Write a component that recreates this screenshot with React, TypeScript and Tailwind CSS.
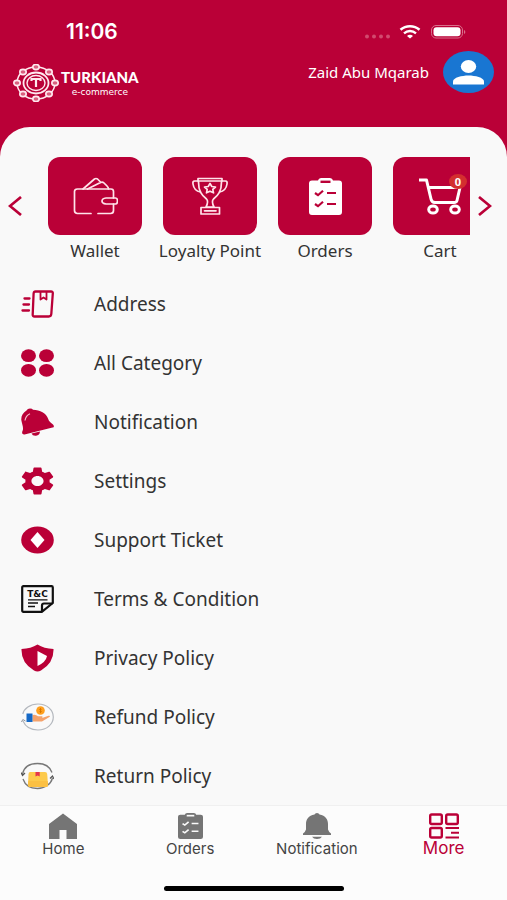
import React, { useRef, useState } from "react";

type IconProps = { className?: string };

const nodes = [
  [23, 3],
  [36, 8],
  [42, 19],
  [36, 30],
  [23, 35],
  [10, 30],
  [4, 19],
  [10, 8],
];

function LogoIcon() {
  return (
    <svg width="46" height="38" viewBox="0 0 46 38" fill="none" stroke="#ffe9ef">
      <ellipse cx="23" cy="19" rx="19" ry="16" strokeWidth="1.5" />
      {nodes.map(([x, y]) => (
        <g key={`${x}-${y}`}>
          <ellipse cx={x} cy={y} rx="3.2" ry="2.6" fill="#d9607f" strokeWidth="1.6" />
        </g>
      ))}
      <ellipse cx="23" cy="19" rx="12.5" ry="10.5" strokeWidth="1.8" />
      <ellipse cx="23" cy="19" rx="9" ry="7.500" strokeWidth="1.4" />
      <path d="M18.500 17v-2h9v2M23 15v8" strokeWidth="2.200" />
    </svg>
  );
}

function StatusIcons() {
  return (
    <svg width="104" height="16" viewBox="0 0 104 16" fill="none" aria-hidden="true">
      <g fill="#d14a6e">
        <circle cx="5" cy="12.5" r="2" />
        <circle cx="12" cy="12.5" r="2" />
        <circle cx="19" cy="12.5" r="2" />
        <circle cx="26" cy="12.5" r="2" />
      </g>
      <path d="M38.500 5.800c5.400-4.700 13.600-4.700 19 0" stroke="#fff" strokeWidth="2.600" />
      <path d="M42 9.300c3.500-3 8.500-3 12 0" stroke="#fff" strokeWidth="2.400" />
      <path d="M45 12c1.800-1.600 4.200-1.600 6 0l-3 2.600z" fill="#fff" />
      <rect x="69.500" y="1.500" width="31" height="12.500" rx="4.500" stroke="#d9708b" />
      <rect x="71.500" y="3.300" width="27" height="9" rx="3" fill="#fff" />
      <path d="M102 6v4c1.800-.6 1.800-3.400 0-4z" fill="#d9708b" />
    </svg>
  );
}

function WalletIcon() {
  return (
    <svg width="46" height="40" viewBox="0 0 46 40" fill="none" stroke="#ffe3ea" strokeWidth="1.700" strokeLinecap="round" strokeLinejoin="round">
      <path d="M19 37.500H5.500q-3 0-3-3v-19q0-2.500 3-2.500H39q2.500 0 2.500 2.500V22M41.500 28v6.500q0 3-3 3H26" />
      <path d="M34 22h9.500q2 0 2 3t-2 3H34q-4-.500-4-3t4-3z" />
      <path d="M11 13 22.500 3q1.500-1 3 0L29 6.500M15.500 13l13-6.500q2-1 3.500.500l3 3q1.500 1.500 1.500 3" />
    </svg>
  );
}

function TrophyIcon() {
  return (
    <svg width="38" height="40" viewBox="0 0 38 40" fill="none" stroke="#ffe3ea" strokeWidth="1.700" strokeLinecap="round" strokeLinejoin="round">
      <path d="M7 2.500h24v2.500H7zM7.500 6c0 9 3 13 8 17 2 2 1.500 4-.500 8h8c-2-4-2.500-6-.500-8 5-4 8-8 8-17" />
      <path d="M7 5H3.500Q1.500 5 2 8q1 7 7.500 8M31 5h3.500q2 0 1.500 3-1 7-7.500 8" />
      <path d="m19 7.500 1.800 3 3.700.500-2.700 2.400.7 3.400-3.500-1.600-3.500 1.600.7-3.400-2.700-2.400 3.700-.500z" />
      <path d="M10 31.500h18.500v6.500H10zM13.500 34.800h11.500" />
    </svg>
  );
}

function ClipboardIcon({ className }: IconProps) {
  return (
    <svg viewBox="0 0 33 37" preserveAspectRatio="none" className={className} fill="none">
      <path d="M3 2.500h6q.500-2.500 3-2.500h9q2.500 0 3 2.500h6q3 0 3 3v28.500q0 3-3 3H3q-3 0-3-3V5.500q0-3 3-3z" fill="currentColor" />
      <path d="M11.500 3.800h10" stroke="var(--mark)" strokeWidth="2.400" />
      <path d="m6 15 3 2.200 5-4.500M6 26l3 2.200 5-4.500M18 15h9M18 26h9" stroke="var(--mark)" strokeWidth="2.200" />
    </svg>
  );
}

function CartIcon() {
  return (
    <svg width="44" height="38" viewBox="0 0 44 38" fill="none" stroke="#fff" strokeWidth="3" strokeLinejoin="round">
      <path d="M1 3h7.500l4.500 19q.700 3.500 4 3.500h20M11 10.500h31l-3 13q-.500 2-3 2" />
      <ellipse cx="15" cy="32.500" rx="4.300" ry="3.500" />
      <ellipse cx="37" cy="32.500" rx="4.300" ry="3.500" />
    </svg>
  );
}

function AddressIcon() {
  return (
    <svg width="33" height="28" viewBox="0 0 33 28" fill="none" stroke="#ba0037" strokeWidth="2.300" strokeLinecap="round" strokeLinejoin="round">
      <path d="M14.500 1.500H30q2 0 1.800 2l-1.500 20.500q-.200 2.500-2.500 2.500H13.500q-2 0-1.800-2L12.600 3.500q.200-2 1.900-2z" />
      <path d="M19.500 2v7.500l3-2 3 2V2" strokeWidth="1.800" />
      <path d="M3.500 8.500h5M2.500 14.500h5.500M1.500 20.500h6.500" />
    </svg>
  );
}

function CategoryIcon() {
  return (
    <svg width="33" height="28" viewBox="0 0 33 28" fill="#ba0037">
      <ellipse cx="7.500" cy="6.700" rx="7.500" ry="6.400" />
      <ellipse cx="25.500" cy="6.700" rx="7.500" ry="6.400" />
      <ellipse cx="7.500" cy="21.300" rx="7.500" ry="6.400" />
      <ellipse cx="25.500" cy="21.300" rx="7.500" ry="6.400" />
    </svg>
  );
}

function RingIcon() {
  return (
    <svg width="33" height="28" viewBox="0 0 33 28" fill="#ba0037">
      <path d="M5.500 2.500Q6.500.500 9 .500q2.300 0 3 1.300C19 2 25.500 5.500 27 10.500c.8 3 3 4 5 6 1.500 1.500 1 3-.5 3L3.500 26.500c-2 .3-3-1.500-2-3.500C3 20 1 16 .3 12 0 8 2 4.500 5.500 2.500z" />
      <path d="m10.500 25.500 8.500-2q-.3 3.800-4 4.200-3.500.3-4.500-2.200z" />
      <path d="M4 12.500c.5-3.500 2-5.500 5-6.800" fill="none" stroke="#f3b8c8" strokeWidth="1.200" />
    </svg>
  );
}

function GearIcon() {
  return (
    <svg width="33" height="28" viewBox="2.200 2 19.600 20" preserveAspectRatio="none" fill="#ba0037">
      <path d="M19.140 12.940c.040-.300.060-.610.060-.940 0-.320-.020-.640-.070-.940l2.030-1.580c.180-.140.230-.410.120-.610l-1.920-3.320c-.120-.220-.370-.290-.590-.220l-2.390.960c-.500-.380-1.030-.700-1.620-.940l-.360-2.540c-.040-.240-.240-.410-.480-.410h-3.840c-.240 0-.430.170-.470.410l-.360 2.540c-.590.240-1.130.570-1.620.940l-2.390-.960c-.220-.080-.470 0-.590.220L2.740 8.870c-.120.210-.080.470.120.610l2.030 1.580c-.050.300-.090.630-.090.940s.020.640.070.940l-2.030 1.580c-.180.140-.230.410-.120.610l1.920 3.320c.120.220.370.290.590.220l2.390-.960c.500.380 1.030.700 1.620.940l.360 2.540c.050.240.240.410.480.410h3.840c.240 0 .440-.170.470-.410l.360-2.540c.590-.240 1.130-.560 1.620-.940l2.390.960c.220.080.470 0 .590-.220l1.920-3.320c.120-.220.070-.470-.120-.610l-2.010-1.580zM12 15.600c-1.980 0-3.600-1.620-3.600-3.600s1.620-3.600 3.600-3.600 3.600 1.620 3.600 3.600-1.620 3.600-3.600 3.600z" />
    </svg>
  );
}

function TicketIcon() {
  return (
    <svg width="33" height="28" viewBox="0 0 33 28">
      <ellipse cx="16.500" cy="14" rx="16.300" ry="13.500" fill="#ba0037" />
      <path d="m16.500 6 7 8-7 8-7-8z" fill="#fff" />
    </svg>
  );
}

function TermsIcon() {
  return (
    <svg width="33" height="28" viewBox="0 0 33 28" fill="none" stroke="#111" strokeWidth="2.200" strokeLinejoin="round">
      <path d="M2.500 1.200h28q1.300 0 1.300 1.300V18l-11 8.800H2.500q-1.300 0-1.300-1.300v-23q0-1.300 1.300-1.300z" />
      <path d="M31.500 18.500h-8.500q-2 0-2 2v6" />
      <path d="M7 14.800h19.500M7 18h10M7 21.500h7" strokeWidth="1.300" />
      <text x="16.500" y="11.500" textAnchor="middle" fontFamily="DejaVu Sans" fontWeight="700" fontSize="9" fill="#111" stroke="none">
        T&amp;C
      </text>
    </svg>
  );
}

function PrivacyIcon() {
  return (
    <svg width="33" height="28" viewBox="0 0 33 28">
      <path d="M16.500.500Q23 4.500 32.500 5 33 19 20 26.500q-3.500 2-7 0Q0 19 .5 5 10 4.500 16.500.500z" fill="#ba0037" />
      <path d="M16.500 7 26 12q-1 6-9.500 10z" fill="#fff" />
    </svg>
  );
}

function RefundIcon() {
  return (
    <svg width="33" height="28" viewBox="0 0 33 28" fill="none">
      <path d="M2 18C5 25 11 27 17 27c9 0 15.300-6 15.300-13S26 1 17 1C9 1 3 5.500 1.800 11" stroke="#b4b8be" strokeWidth="1.200" />
      <path d="m.5 19 1.300-2.500L4.500 18" stroke="#8f949c" />
      <circle cx="19.500" cy="7.500" r="4.300" fill="#ff9f1c" />
      <path d="M19.500 5v5M18.300 6.500h2.200M18.500 8.500h2.200" stroke="#d97800" />
      <path d="M11.500 12q3-1 5.500 1.200h4q1.500.800 0 1.800l6.500-2.300q2-.200 1.300 1L21 18.500h-9.500z" fill="#f4a26b" />
      <path d="M5.500 10.500h6v8.500h-6z" fill="#1569c7" />
    </svg>
  );
}

function ReturnIcon() {
  return (
    <svg width="33" height="28" viewBox="0 0 33 28" fill="none">
      <path d="M1.500 12C3 5 9 1.500 16.500 1.500S29 5 31 10.500M31.500 16C30 22 24 26.500 16.500 26.500S4 23 2 17" stroke="#777" strokeWidth="1.300" />
      <path d="m0 10.500 1.500 3L4 11M29 16.500l2.500-2.500 1.500 3" stroke="#555" strokeWidth="1.200" />
      <path d="M9 10h15q2 0 2.200 2L27 23q0 2-2 2H9q-2 0-2-2l.5-11Q7.700 10 9 10z" fill="#fdca4c" />
      <path d="M7.300 19h19.400l.3 4q0 2-2 2H9q-2 0-2-2z" fill="#fbc043" />
      <path d="M14.500 10h4.200v4.500l-2-1-2.200 1z" fill="#e5344c" />
    </svg>
  );
}

function HomeIcon() {
  return (
    <svg width="28" height="26" viewBox="0 0 28 26" fill="#757575">
      <path d="M14 .500 28 11v15H17.500v-9h-7v9H0V11z" />
    </svg>
  );
}

function BellIcon() {
  return (
    <svg width="28" height="26" viewBox="0 0 28 26" fill="#757575">
      <path d="M11.500 1.500Q12 0 14 0t2.500 1.500C22.500 2.500 25 6.500 25 11v5.500q.5 2 3 4V22H0v-1.500q2.500-2 3-4V11c0-4.500 2.500-8.500 8.500-9.500zM9 23.700h10q-1.500 2.300-5 2.300t-5-2.300z" />
    </svg>
  );
}

function MoreIcon() {
  return (
    <svg width="30" height="26" viewBox="0 0 30 26" fill="none" stroke="#ba0037" strokeWidth="2.400">
      <rect x="1.200" y="1.500" width="11.600" height="9.500" rx="1.500" />
      <rect x="17.200" y="1.500" width="11.600" height="9.500" rx="1.500" />
      <rect x="1.200" y="15" width="11.600" height="9.500" rx="1.500" />
      <path d="M16.500 15H30M22 19.700h8M16.500 24.500H30" strokeWidth="2" />
    </svg>
  );
}

const cards = [
  { label: "Wallet", icon: <WalletIcon /> },
  { label: "Loyalty Point", icon: <TrophyIcon /> },
  {
    label: "Orders",
    icon: <ClipboardIcon className="h-[37px] w-[33px] text-white [--mark:#ba0037]" />,
  },
  { label: "Cart", icon: <CartIcon />, count: 0 },
];

const menu = [
  { label: "Address", icon: <AddressIcon /> },
  { label: "All Category", icon: <CategoryIcon /> },
  { label: "Notification", icon: <RingIcon /> },
  { label: "Settings", icon: <GearIcon /> },
  { label: "Support Ticket", icon: <TicketIcon /> },
  { label: "Terms & Condition", icon: <TermsIcon /> },
  { label: "Privacy Policy", icon: <PrivacyIcon /> },
  { label: "Refund Policy", icon: <RefundIcon /> },
  { label: "Return Policy", icon: <ReturnIcon /> },
];

const tabs = [
  { label: "Home", icon: <HomeIcon /> },
  {
    label: "Orders",
    icon: <ClipboardIcon className="h-[26px] w-[25px] text-[#757575] [--mark:#fafafa]" />,
  },
  { label: "Notification", icon: <BellIcon /> },
  { label: "More", icon: <MoreIcon /> },
];

function Header() {
  return (
    <header className="h-[157px] text-white">
      <div className="flex h-12 items-end justify-between pl-[66px] pr-[41px] pb-1">
        <span className="font-['Inter'] text-[21px] leading-6 font-semibold">11:06</span>
        <div className="pb-1">
          <StatusIcons />
        </div>
      </div>
      <div className="flex items-start justify-between px-[13px]">
        <a href="#home" className="flex items-center gap-[2px] pt-4">
          <LogoIcon />
          <span className="flex flex-col items-center">
            <span className="font-['Lato'] text-[15px] leading-[18px] font-black">TURKIANA</span>
            <span className="font-['DejaVu_Sans'] text-[9px] leading-3">e-commerce</span>
          </span>
        </a>
        <a href="#profile" className="flex items-center gap-[14px] pt-[3px]">
          <span className="text-[15px] leading-5">Zaid Abu Mqarab</span>
          <svg width="51" height="42" viewBox="0 0 51 42">
            <ellipse cx="25.500" cy="21" rx="25.500" ry="21" fill="#1976d2" />
            <ellipse cx="25.500" cy="15.500" rx="7.700" ry="6.500" fill="#fff" />
            <path d="M10 33.500v-3c0-4 9-6 15.500-6S41 26.500 41 30.500v3z" fill="#fff" />
          </svg>
        </a>
      </div>
    </header>
  );
}

function Shortcuts() {
  const listRef = useRef<HTMLDivElement>(null);
  const handleScroll = (step: number) => {
    listRef.current?.scrollBy({ left: step, behavior: "smooth" });
  };

  return (
    <section className="flex items-start pt-[30px]">
      <button
        aria-label="Previous"
        onClick={() => handleScroll(-115)}
        className="flex h-[98px] w-[34px] shrink-0 items-center pl-2"
      >
        <svg width="14" height="20" viewBox="0 0 14 20" fill="none" stroke="#ba0037" strokeWidth="2.700">
          <path d="M13 1 2 10l11 9" />
        </svg>
      </button>
      <div ref={listRef} className="flex h-[117px] min-w-0 flex-1 gap-[21px] overflow-hidden pl-[14px]">
        {cards.map((item) => (
          <button key={item.label} className="flex w-[94px] shrink-0 flex-col items-center gap-1">
            <span className="relative flex h-[78px] w-full items-center justify-center rounded-xl bg-[#ba0037]">
              {item.icon}
              {item.count !== undefined && (
                <span className="absolute top-[17px] right-5 flex h-[15px] w-[18px] items-center justify-center rounded-[50%] bg-[#d32f2f] text-[11px] leading-none font-bold text-white">
                  {item.count}
                </span>
              )}
            </span>
            <span className="text-[17px] leading-6 whitespace-nowrap">{item.label}</span>
          </button>
        ))}
      </div>
      <button
        aria-label="Next"
        onClick={() => handleScroll(115)}
        className="flex h-[98px] w-[37px] shrink-0 items-center pl-2"
      >
        <svg width="14" height="20" viewBox="0 0 14 20" fill="none" stroke="#ba0037" strokeWidth="2.700">
          <path d="m1 1 11 9-11 9" />
        </svg>
      </button>
    </section>
  );
}

export default function App() {
  const [active, setActive] = useState<string>("More");

  return (
    <div className="flex min-h-screen flex-col bg-[#f9f9f9] font-['Noto_Sans',sans-serif] text-[#333]">
      <div className="bg-[#ba0037]">
        <Header />
      </div>
      <main className="-mt-[30px] flex-1 rounded-t-[30px] bg-[#f9f9f9]">
        <Shortcuts />
        <ul>
          {menu.map((item) => (
            <li key={item.label}>
              <a href="#menu" className="flex h-[59px] items-center gap-10 pl-[21px]">
                {item.icon}
                <span className="text-[19px] leading-6">{item.label}</span>
              </a>
            </li>
          ))}
        </ul>
      </main>
      <nav className="border-t border-[#f0f0f0] bg-[#fcfcfc]">
        <div className="grid h-[80px] grid-cols-4">
          {tabs.map((item) => (
            <button
              key={item.label}
              onClick={() => setActive(item.label)}
              className="flex flex-col items-center pt-[7px]"
            >
              {item.icon}
              <span
                className={
                  active === item.label
                    ? "font-['Inter'] text-[17px] leading-[18px] text-[#ba0037]"
                    : "font-['Inter'] text-[15px] leading-5 text-[#444]"
                }
              >
                {item.label}
              </span>
            </button>
          ))}
        </div>
        <div className="flex h-[14px] justify-center">
          <div className="h-[5px] w-[180px] rounded-full bg-black" />
        </div>
      </nav>
    </div>
  );
}
